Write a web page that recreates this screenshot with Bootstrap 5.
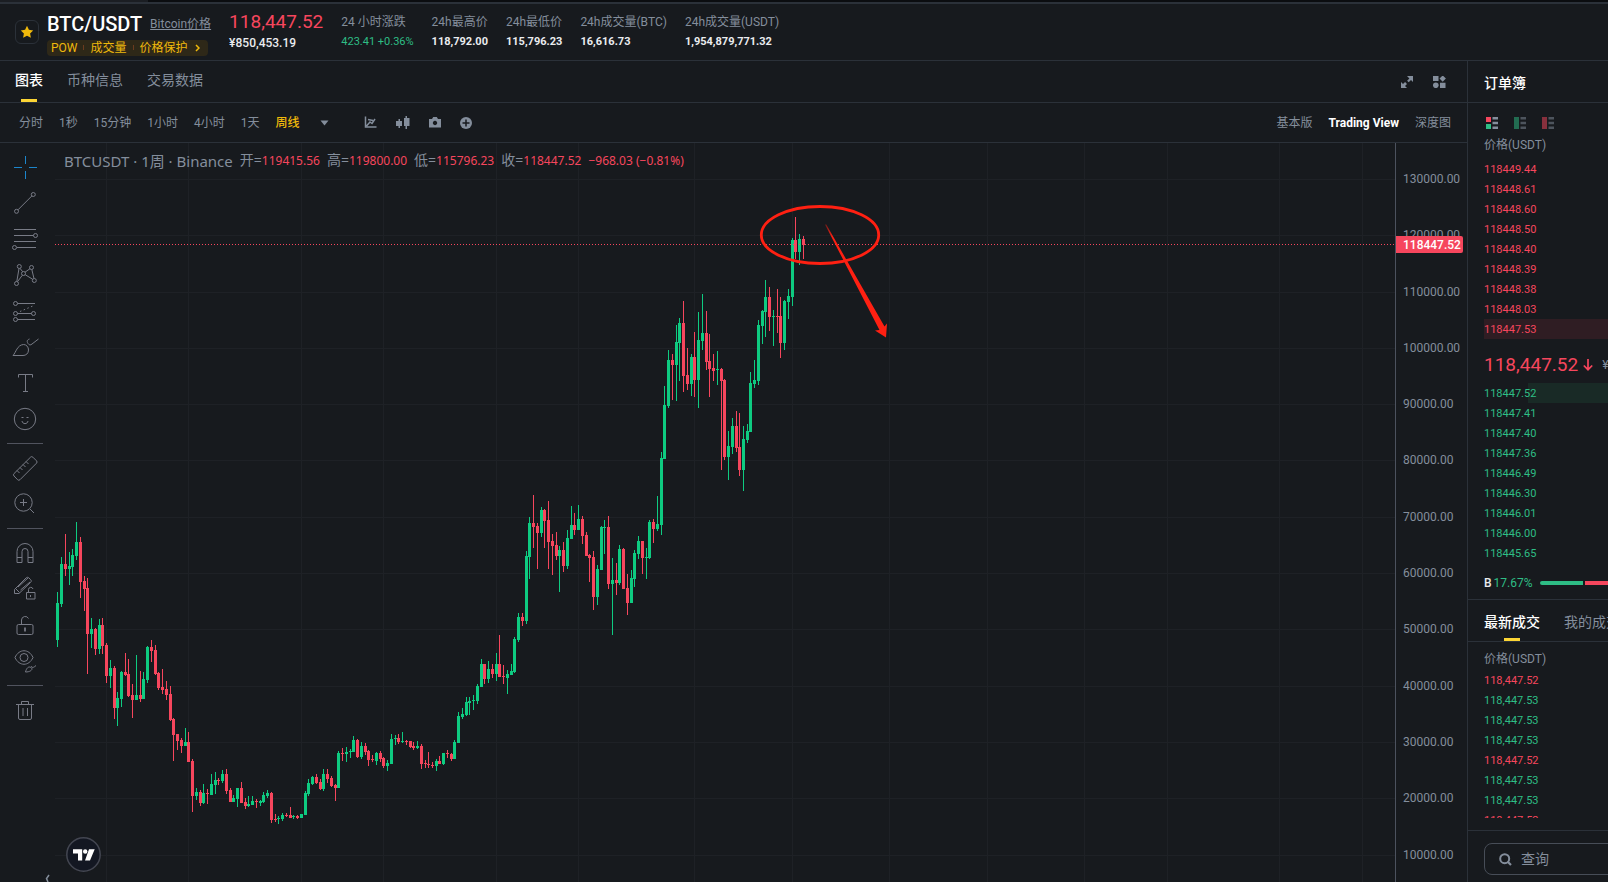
<!DOCTYPE html>
<html lang="zh-CN" data-bs-theme="dark">
<head>
<meta charset="utf-8">
<meta name="viewport" content="width=device-width, initial-scale=1">
<title>BTC/USDT</title>
<link href="https://cdn.jsdelivr.net/npm/bootstrap@5.3.0/dist/css/bootstrap.min.css" rel="stylesheet">
<style>
:root{--bg:#171a1e;--line:#2b3139;--muted:#848e9c;--text:#eaecef;--up:#2ebd85;--down:#f6465d;--gold:#f0b90b}
body{background:var(--bg);color:var(--text);font:12px/20px Roboto,"Noto Sans CJK SC",sans-serif;overflow:hidden}
a{color:inherit;text-decoration:none}
button{background:none;border:0;padding:0;color:inherit;font:inherit}
h1,h2,p,dl,dd,dt,ul{margin:0;font-weight:400}
svg{display:block;flex-shrink:0}
.c-muted{color:var(--muted)}.c-up{color:var(--up)}.c-down{color:var(--down)}.c-gold{color:var(--gold)}
.line-b{border-bottom:1px solid var(--line)}
.topstrip{height:4px;background:#0b0d10;border-bottom:2px solid var(--line)}
.topstrip span{display:block;width:148px;height:2px;background:#1b1e23}
.head-row{height:57px;padding:0 15px;gap:18px}
.star-btn{width:24px;height:24px;border:1px solid var(--line);border-radius:6px}
.pair-name{font-size:20px;line-height:24px;font-weight:500}
.pair-box{padding-top:3px}
.tags{background:#2e2818;border-radius:4px;height:16px;line-height:16px;padding:0 8px 0 4px;gap:6px;width:161px;margin-top:4px}
.tags i{width:1px;height:5px;background:#6b3b1e}
.num{font-size:11px}
.last-price{font-size:19px;line-height:22px}
.tab-row{height:42px;font-size:14px;gap:24px;padding:0 14px 0 15px}
.tab-link{position:relative;height:41px;line-height:38px;white-space:nowrap}
.tab-link.on{color:#fff;font-weight:500}
.tab-link.on::after{content:"";position:absolute;left:50%;bottom:0;width:16px;height:3px;margin-left:-8px;background:#fcd535}
.layout-btns{gap:20px;margin-right:7px}
.bar-row{height:40px;padding:0 16px 0 19px}
.bar-icons{gap:19px;margin-left:19px}
.tools{width:50px;padding-top:6px}
.tools button{height:36px;width:50px;color:#787b86}
.tools button.on{color:#1c86cc}
.tools hr{width:36px;margin:6px 0;border:0;height:1px;background:#50535e;opacity:1}
.tools svg,.ln{fill:none;stroke:currentColor}
.plot{min-height:300px;margin-left:5px}
.axis{width:72px;border-left:1px solid #4c525e}
.legend-row{left:9px;top:6px;font:15px/22px "Noto Sans","Noto Sans CJK SC",sans-serif;color:var(--muted);gap:7px}
.legend-row span{font-size:12px}
.legend-row b{font-weight:400;font-size:14px}
.tv{left:11px;bottom:10px}
.book{width:141px;border-left:1px solid var(--line)}
.book .pad{padding-left:16px}
.book ul{font-size:11px;list-style:none;padding:0}
.book li{height:20px;line-height:22px;width:180px}
.book li.hit-a{background:#2f1d23}
.book li.hit-b{background:linear-gradient(90deg,transparent 44px,#192a26 44px)}
.book-tab{height:42px;font-size:14px;gap:24px}
.book-tab h2{font-size:14px}
.book-tab .tab-link{line-height:44px}
.book-modes{gap:16px;padding:14px 0 6px 2px}
.book-price{height:44px;padding-top:8px;gap:5px}
.bs-split{height:37px;padding-top:4px}
.bs-split i{height:4px;width:43px;flex-shrink:0;background:var(--up);border-radius:2px 0 0 2px}
.bs-split i+i{background:var(--down);margin-left:2px;border-radius:0}
.bs-split .pct{width:48px;padding-left:2px;flex-shrink:0}
.trades{height:0;padding-top:7px;margin-bottom:12px}
.trades div{margin-bottom:1px}
.find-row{border-top:1px solid var(--line);padding-top:12px;padding-bottom:7px}
.find{height:32px;width:180px;border:1px solid #474d57;border-radius:8px;padding:0 14px;gap:9px}
.find input{background:none;border:0;outline:0;color:var(--text);font-size:14px;width:100px;padding:0}
.find input::placeholder{color:var(--muted);opacity:1}
</style>
</head>
<body class="vh-100 d-flex flex-column">
<div class="topstrip flex-shrink-0"><span></span></div>

<header class="head-row line-b d-flex align-items-center flex-shrink-0 text-nowrap">
  <div class="d-flex align-items-center gap-2">
    <button class="star-btn d-flex align-items-center justify-content-center" aria-label="收藏"><svg width="14" height="14" viewBox="0 0 14 14"><path fill="#f0b90b" d="M7 .8l1.9 4 4.3.6-3.1 3 .8 4.4L7 10.700l-3.900 2.100.8-4.400-3.100-3 4.300-.6z"/></svg></button>
    <div class="pair-box">
      <div class="d-flex align-items-center gap-2"><h1 class="pair-name">BTC/USDT</h1><a href="#" class="c-muted text-decoration-underline">Bitcoin价格</a></div>
      <a href="#" class="tags d-flex align-items-center c-gold"><span>POW</span><i></i><span>成交量</span><i></i><span>价格保护</span><svg class="ms-auto" width="5" height="8" viewBox="0 0 5 8"><path d="M1 1l3 3-3 3" fill="none" stroke="currentColor" stroke-width="1.500"/></svg></a>
    </div>
  </div>
  <div><div class="last-price c-down">118,447.52</div><div class="fw-medium">¥850,453.19</div></div>
  <dl><dt class="c-muted">24 小时涨跌</dt><dd class="num c-up">423.41 +0.36%</dd></dl>
  <dl><dt class="c-muted">24h最高价</dt><dd class="num fw-bold">118,792.00</dd></dl>
  <dl><dt class="c-muted">24h最低价</dt><dd class="num fw-bold">115,796.23</dd></dl>
  <dl><dt class="c-muted">24h成交量(BTC)</dt><dd class="num fw-bold">16,616.73</dd></dl>
  <dl><dt class="c-muted">24h成交量(USDT)</dt><dd class="num fw-bold">1,954,879,771.32</dd></dl>
</header>

<div class="d-flex flex-grow-1 overflow-hidden">
  <main class="flex-grow-1 d-flex flex-column overflow-hidden">
    <nav class="tab-row line-b d-flex c-muted flex-shrink-0">
      <a href="#" class="tab-link on">图表</a><a href="#" class="tab-link">币种信息</a><a href="#" class="tab-link">交易数据</a>
      <div class="layout-btns ms-auto d-flex align-items-center">
        <button aria-label="全屏"><svg width="12" height="12" viewBox="0 0 12 12" fill="#848e9c"><path d="M6 0h6v6l-2-2-2.300 2.300-1.600-1.600L8.400 2.400zM0 12h6L4 10l2-2-1.900-1.900L2 8 0 6z"/></svg></button>
        <button aria-label="布局"><svg width="13" height="12" viewBox="0 0 13 12" fill="#848e9c"><path d="M0 0h5.500v5H0zM7 6.800h5.500V12H7zM9.700-.6l3.200 3.200-3.200 3.200L6.500 2.600z"/><circle cx="2.800" cy="9.300" r="2.800"/></svg></button>
      </div>
    </nav>
    <div class="bar-row line-b d-flex align-items-center gap-3 c-muted flex-shrink-0">
      <button>分时</button><button>1秒</button><button>15分钟</button><button>1小时</button><button>4小时</button><button>1天</button><button class="c-gold fw-medium">周线</button>
      <button aria-label="更多周期" class="ms-1"><svg width="9" height="6" viewBox="0 0 9 6"><path fill="#848e9c" d="M.5.500h8l-4 5z"/></svg></button>
      <div class="bar-icons d-flex align-items-center">
        <button aria-label="指标"><svg width="13" height="13" viewBox="0 0 13 13"><path d="M1.500.5v10.500H12.500M2.500 10l3.500-4 2 1.500L11 3M4 3.500l5 1" fill="none" stroke="#848e9c" stroke-width="1.500"/></svg></button>
        <button aria-label="K线样式"><svg width="14" height="13" viewBox="0 0 14 13" fill="#848e9c"><path d="M2.500 3h1.500v2h2v5H4v2H2.500v-2H0V5h2.500zM9.500 0H11v2h2.500v8H11v3H9.500v-3H8V2h1.500z"/></svg></button>
        <button aria-label="截图"><svg width="12" height="13" viewBox="0 0 12 13"><path fill="#848e9c" fill-rule="evenodd" d="M0 3h3l1.200-2h3.600L9 3h3v8.500H0zM6 4.800a2.200 2.200 0 1 0 .01 0z"/></svg></button>
        <button aria-label="添加"><svg width="12" height="12" viewBox="0 0 12 12"><circle cx="6" cy="6" r="6" fill="#848e9c"/><path d="M6 2.500v7M2.500 6h7" stroke="#171a1e" stroke-width="1.500"/></svg></button>
      </div>
      <div class="ms-auto d-flex gap-3"><button>基本版</button><button class="text-white fw-bold">Trading View</button><button>深度图</button></div>
    </div>

    <div class="d-flex flex-grow-1 overflow-hidden">
      <div class="tools d-flex flex-column align-items-center flex-shrink-0 position-relative" id="tools"></div>
      <div class="plot flex-grow-1 position-relative overflow-hidden">
        <svg id="chart" width="100%" height="100%" class="position-absolute top-0 start-0" aria-label="BTCUSDT K线图"></svg>
        <div class="legend-row position-absolute d-flex align-items-center text-nowrap">
          <div>BTCUSDT · 1周 · Binance</div>
          <span><b>开=</b><span class="c-down">119415.56</span></span><span><b>高=</b><span class="c-down">119800.00</span></span><span><b>低=</b><span class="c-down">115796.23</span></span><span><b>收=</b><span class="c-down">118447.52</span></span><span class="c-down">−968.03 (−0.81%)</span>
        </div>
        <a href="#" class="tv position-absolute" aria-label="TradingView"><svg width="35" height="35" viewBox="0 0 35 35"><circle cx="17.500" cy="17.500" r="16.700" fill="#131722" stroke="#434651" stroke-width="1.500"/><g fill="#fff"><path d="M7 12.300h9.200v11.200H12v-7H7zM23 12.300h5.700l-4.700 11.200h-5z"/><circle cx="19.200" cy="14.500" r="2.200"/></g></svg></a>
      </div>
      <svg id="axis" class="axis flex-shrink-0" height="100%" overflow="hidden"></svg>
    </div>
  </main>

  <aside class="book flex-shrink-0 overflow-hidden text-nowrap d-flex flex-column">
    <div class="book-tab line-b pad flex-shrink-0"><h2 class="tab-link fw-medium">订单簿</h2></div>
    <div class="pad">
      <div class="book-modes d-flex">
        <button aria-label="全部"><svg width="12" height="12" viewBox="0 0 12 12"><path fill="#f6465d" d="M0 0h5v5H0z"/><path fill="#2ebd85" d="M0 7h5v5H0z"/><path fill="#848e9c" d="M6.500 0H12v2.500H6.500zM6.500 4.700H12v2.500H6.500zM6.500 9.500H12V12H6.500z"/></svg></button>
        <button aria-label="买单" class="opacity-50"><svg width="12" height="12" viewBox="0 0 12 12"><path fill="#2ebd85" d="M0 0h5v12H0z"/><path fill="#848e9c" d="M6.500 0H12v2.500H6.500zM6.500 4.700H12v2.500H6.500zM6.500 9.500H12V12H6.500z"/></svg></button>
        <button aria-label="卖单" class="opacity-50"><svg width="12" height="12" viewBox="0 0 12 12"><path fill="#f6465d" d="M0 0h5v12H0z"/><path fill="#848e9c" d="M6.500 0H12v2.500H6.500zM6.500 4.700H12v2.500H6.500zM6.500 9.500H12V12H6.500z"/></svg></button>
      </div>
      <div class="c-muted mb-1">价格(USDT)</div>
      <ul class="c-down"><li>118449.44</li><li>118448.61</li><li>118448.60</li><li>118448.50</li><li>118448.40</li><li>118448.39</li><li>118448.38</li><li>118448.03</li><li class="hit-a">118447.53</li></ul>
      <div class="book-price d-flex align-items-center"><span class="last-price c-down">118,447.52</span><svg class="c-down" width="10" height="12" viewBox="0 0 10 12"><path d="M5 0v10.500M.8 6.500L5 10.700l4.200-4.200" fill="none" stroke="currentColor" stroke-width="1.700"/></svg><span class="c-muted ms-1">¥850,453.19</span></div>
      <ul class="c-up"><li class="hit-b">118447.52</li><li>118447.41</li><li>118447.40</li><li>118447.36</li><li>118446.49</li><li>118446.30</li><li>118446.01</li><li>118446.00</li><li>118445.65</li></ul>
    </div>
    <div class="bs-split line-b pad d-flex align-items-center flex-shrink-0"><span class="fw-medium">B</span><span class="pct c-up">17.67%</span><i></i><i></i></div>
    <div class="book-tab line-b pad d-flex flex-shrink-0"><a href="#" class="tab-link on">最新成交</a><a href="#" class="tab-link c-muted">我的成交</a></div>
    <div class="trades pad flex-grow-1 overflow-hidden">
      <div class="c-muted">价格(USDT)</div>
      <ul class="c-up"><li class="c-down">118,447.52</li><li>118,447.53</li><li>118,447.53</li><li>118,447.53</li><li class="c-down">118,447.52</li><li>118,447.53</li><li>118,447.53</li><li class="c-down">118,447.52</li></ul>
    </div>
    <div class="find-row pad flex-shrink-0">
      <label class="find d-flex align-items-center"><svg width="13" height="13" viewBox="0 0 13 13"><circle cx="5.700" cy="5.700" r="4.500" fill="none" stroke="#848e9c" stroke-width="2"/><path d="M8.500 8.500l3.500 3.500" stroke="#848e9c" stroke-width="2.200"/></svg><input type="text" placeholder="查询" aria-label="查询"></label>
    </div>
  </aside>
</div>

<script src="https://cdn.jsdelivr.net/npm/bootstrap@5.3.0/dist/js/bootstrap.bundle.min.js"></script>
<script>
// Drawing toolbar, 28-unit icons; null is a separator
const c = (x, y, r = 2) => `<circle cx="${x}" cy="${y}" r="${r}"/>`;
const p = (d, extra = '') => `<path d="${d}" ${extra}/>`;
const tools = [
  ['十字线', p('M14.500 3v8M14.500 18v8M3 14.500h8M18 14.500h8')],
  ['趋势线', c(22.3,5.5) + c(5.5,22.3) + p('M7 20.800L20.800 7')],
  ['斐波那契', p('M3 4.500h22M3 10.500h19.500M3 16.500h22M6 22.500h19') + c(24.5,10.5) + c(3.5,22.5)],
  ['形态', c(8.3,5.5) + c(20.5,6.5) + c(12.5,12.5) + c(5.5,22.5) + c(23.3,19.5) + p('M8 7.500L5.800 20.500M9 7.300l2.700 3.500M19 7.700l-5 3.500M11.400 14.200L6.500 20.700M14.200 13.700l7.500 4.600M20.800 8.500l2.200 9')],
  ['预测', c(4.5,6.5) + c(4.5,16.5) + c(22.5,16.5) + c(4.5,22.5) + p('M6.500 6.500H24M6.500 16.500h14M6.500 22.500H24') + p('M9 14.500l14-6', 'stroke-dasharray="1.500 2.500"')],
  ['画笔', p('M2 22.500C5 19.500 6 12 12.500 11.500c3 0 5 2.500 5 5.500 0 3.500-2.500 5.500-5.500 5.500zM18.500 6c-3 1-2.500 3-1.500 4.500s2.500 2 4 .5L27.500 6')],
  ['文字', p('M7.500 8.500v-3h14v3M14.500 5.500v17M12 22.500h5')],
  ['表情', c(14,14,10.7) + p('M11 16c.5 3.500 5.500 3.500 6 0') + p('M10.500 12.500h2M15.500 12.500h2')],
  null,
  ['测量', p('M19.500 3.200q1.200-1.200 2.400 0L25.500 6.800q1.200 1.200 0 2.400L9 25.700q-1.200 1.200-2.400 0L3 22q-1.200-1.200 0-2.400zM6 16.500l2.500 2.500M9 13.500l2.500 2.500M12 10.500l2.500 2.500M15 7.500l2.500 2.500')],
  ['放大', c(12.5,12.5,8.7) + p('M12.500 9v7M9 12.500h7M19 19l4 4')],
  null,
  ['磁铁', p('M6 23.500V12.500a8 8 0 0 1 16 0v11h-5V12.500a3 3 0 0 0-6 0v11zM6 18.500h5M17 18.500h5')],
  ['保持绘图', p('M3.500 18.500v-4L15 3c1-1 2-1 3 0l1.500 1.500c1 1 1 2 0 3L8 18.500zM5 14l3.500 3.500M7 12l10-9M9.500 15L19 7M15.500 17.500h8.500v6.500h-8.500zM17.500 17.500v-3a2.300 2.300 0 0 1 4.500-.5M19.500 20v2')],
  ['锁定', p('M7.500 13.500h13a1.500 1.500 0 0 1 1.500 1.500v7a1.500 1.500 0 0 1-1.500 1.500h-13A1.500 1.500 0 0 1 6 22v-7a1.500 1.500 0 0 1 1.500-1.500zM10.500 13.500V9a3.700 3.700 0 0 1 7-1.500') + p('M14 16.500v4', 'stroke-width="1.800"')],
  ['隐藏', p('M4 10.500c4-9 14-9 18 0-4 9-14 9-18 0z') + c(13,10.5,4) + p('M14.500 25c1-4 3-6 5.500-4.500s0 4.500-5.500 4.500zM20.500 19c0 2 2 2 4.500-.5')],
  null,
  ['删除', p('M5 8.500h18M10.500 8.500v-3h7v3M7.500 8.500v13.500q0 1.500 1.500 1.500h10q1.500 0 1.500-1.500V8.500M12 12v8M16.500 12v8')]
];
document.getElementById('tools').innerHTML = tools.map((t, i) => t
  ? `<button class="d-flex align-items-center justify-content-center${i ? '' : ' on'}" aria-label="${t[0]}"><svg width="28" height="28" viewBox="0 0 28 28">${t[1]}</svg></button>`
  : '<hr>').join('') + '<svg class="position-absolute ln c-muted bottom-0 end-0" width="5" height="8" viewBox="0 0 5 8"><path d="M4 1L1.500 4.500 3 8" stroke-width="1.500"/></svg>';

// Weekly candles: direction, then wick top, body top, body bottom, wick bottom
const candles = `u592,603,640,647 u557,564,604,607 d534,564,569,576 u552,566,569,585 u549,555,567,576 u522,542,556,560 d537,542,582,598 d576,581,589,611 d578,588,634,674 u618,629,634,648
d628,629,649,655 u619,625,649,654 d618,625,646,654 d643,645,676,683 u660,668,676,688 d666,668,708,719 u692,698,708,726 u671,672,699,707 d653,672,675,676 d659,674,696,697
d684,695,700,718 u655,695,700,700 d671,695,699,702 u672,679,699,699 u646,647,680,683 d640,647,651,662 d645,650,674,675 d672,673,688,690 d669,687,690,694 d681,689,695,700
d686,694,720,721 d718,719,735,761 d734,734,741,750 d738,740,746,753 u728,742,746,746 d732,742,762,762 d759,761,796,812 u788,792,796,800 d790,792,803,806 u784,793,803,804
d789,793,794,804 u774,784,795,795 u772,780,785,794 d778,780,781,785 u770,774,781,783 d769,774,791,794 d788,790,802,802 u795,798,802,802 u788,788,799,807 d782,788,803,803
d798,802,806,809 u796,804,806,807 u796,801,805,805 d799,801,802,808 u800,801,803,806 u792,795,802,803 u790,793,796,798 d792,793,820,823 d814,819,820,822 u816,818,819,824
u813,815,819,821 d813,815,816,817 d807,815,818,818 u815,816,817,819 d815,816,818,819 u814,814,818,818 u791,793,815,815 u779,783,794,796 u776,777,784,785 d774,777,783,784
d779,782,789,790 u769,774,789,791 d769,774,779,783 d776,778,786,787 d784,785,788,801 u751,753,788,788 d748,753,754,761 u747,752,754,762 u749,751,752,758 u736,740,752,752
d739,740,757,758 u742,746,757,759 d743,746,752,755 d750,751,760,766 d755,759,760,762 u752,753,761,765 d751,753,759,762 d757,758,766,768 u760,763,766,771 u734,739,764,764
u735,738,739,745 d734,738,742,744 u732,741,742,743 d740,741,742,745 d741,741,747,748 d742,746,748,750 u741,746,748,749 d744,746,764,769 d760,763,764,768 d752,764,765,768
d762,765,766,768 u759,761,766,771 d756,761,764,764 u753,753,764,765 d750,753,754,758 d753,754,759,761 u740,742,759,759 u712,716,743,743 u708,714,717,719 u697,702,715,716
u697,701,703,715 u695,700,701,710 u684,686,701,704 u659,664,687,687 d664,664,679,684 u661,669,679,683 d664,669,674,678 u653,664,674,681 d635,664,677,677 d665,676,677,684
u670,674,678,694 u664,671,675,675 u637,639,672,673 u613,617,640,642 d613,617,621,626 u551,556,621,624 u517,523,557,579 d495,523,527,548 d523,526,533,569 u507,510,533,537
d509,510,521,548 d501,520,542,569 d534,541,546,575 d532,545,556,560 u546,550,556,592 d542,550,566,572 u530,538,566,569 u506,525,539,539 d513,525,530,535 u505,519,530,530
d516,519,536,544 d532,535,556,556 d554,555,558,582 d551,557,597,610 u565,569,597,605 u526,527,570,570 u520,527,528,554 d516,527,584,589 u558,580,584,635 d563,580,583,595
u545,549,583,585 d548,549,589,589 d574,588,603,615 u570,578,603,603 u550,553,579,587 u536,541,554,559 d541,541,558,574 u548,557,558,579 u520,522,558,559 d519,522,529,543
u496,524,529,531 u452,458,525,535 u386,405,459,459 u350,360,406,408 d354,360,365,400 u325,342,365,401 u318,323,343,381 d301,323,376,392 d348,375,384,390 u354,357,384,396
d332,357,380,397 u312,340,380,408 u294,333,341,350 d311,333,362,370 d334,361,369,397 d354,368,371,381 u351,369,370,385 d368,369,381,470 d379,380,457,460 u431,446,457,480
u418,426,447,454 d411,426,448,452 d413,447,470,476 u426,439,470,491 u424,431,440,443 u372,383,432,432 u360,380,384,388 u320,325,381,385 u310,311,326,344 u280,297,312,337
d287,297,317,331 u310,316,317,346 d289,316,317,333 d297,316,343,358 u300,301,343,350 u289,296,302,319 u238,240,297,306 d217,240,252,259 u234,239,252,265 d236,239,245,259`.split(/\s+/);
const top0 = 143;
const rows = [36,92,149,205,261,317,374,430,486,543,599,655,712];
let s = '<defs><linearGradient id="fade" gradientUnits="userSpaceOnUse" x1="770" y1="80" x2="777" y2="94"><stop offset="0" stop-color="#ff2012" stop-opacity=".3"/><stop offset="1" stop-color="#ff2012"/></linearGradient></defs>';
rows.forEach(y => s += `<rect x="0" y="${y}" width="100%" height="1" fill="#1e2126"/>`);
[51,133,246,328,441,523,639,737,834,932,1029,1112,1224,1307].forEach(x => s += `<rect x="${x}" y="0" width="1" height="100%" fill="#1e2126"/>`);
candles.forEach((k, i) => {
  const [h, a, b, l] = k.slice(1).split(',').map(v => v - top0);
  const x = Math.floor(2.8 + i * 3.747);
  s += `<path fill="${k[0] === 'u' ? '#0ecb81' : '#f6465d'}" d="M${x} ${h}h1v${l - h}h-1zM${x - 1} ${a}h3v${b - a}h-3z"/>`;
});
s += '<line x1="0" x2="100%" y1="101.500" y2="101.500" stroke="#f6465d" stroke-dasharray="1 2"/>';
s += '<ellipse cx="765" cy="92" rx="58.700" ry="28.500" fill="none" stroke="#ff2012" stroke-width="2.800"/>';
s += '<path fill="url(#fade)" d="M770 81.500L771.300 81.500 829.500 183.500 832 180.500 831 194.500 820 187.500 824.500 187z"/>';
document.getElementById('chart').innerHTML = s;
document.getElementById('axis').innerHTML = rows.map((y, i) =>
  `<text x="7" y="${y + 4}" fill="#848e9c" font-size="12">${(13 - i) * 10000}.00</text>`).join('') +
  '<path fill="#f6465d" d="M0 93h65q2 0 2 2v13q0 2-2 2H0z"/><text x="7" y="106" fill="#fff" font-size="12" font-weight="500">118447.52</text>';
</script>
</body>
</html>
